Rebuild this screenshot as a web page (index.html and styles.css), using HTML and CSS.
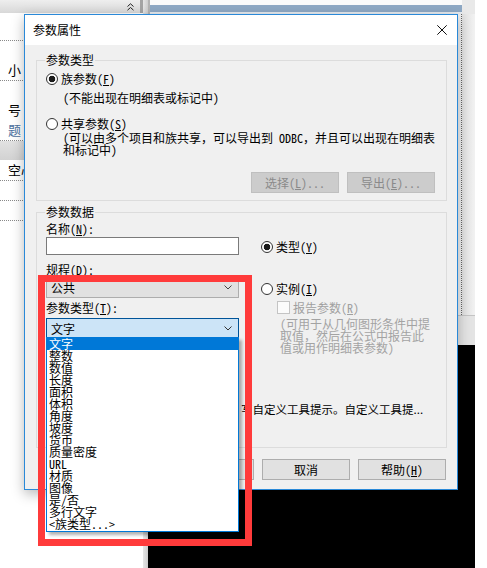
FILE: index.html
```html
<!DOCTYPE html>
<html lang="zh-CN">
<head>
<meta charset="utf-8">
<title>参数属性</title>
<link rel="stylesheet" href="styles.css">
</head>
<body>
<div class="desk">
  <div class="leftpane">
    <div class="lp-top">
      <svg class="chev" width="7" height="8" viewBox="0 0 7 8"><path d="M0.5 3.5 L3.5 0.8 L6.5 3.5 M0.5 7.2 L3.5 4.5 L6.5 7.2" fill="none" stroke="#222" stroke-width="1"/></svg>
    </div>
    <div class="lp-row r1"></div>
    <div class="lp-row r2"><span>小</span></div>
    <div class="lp-row r3"><span>号</span><span class="link">题</span></div>
    <div class="lp-band"></div>
    <div class="lp-row r4"><span>空心</span></div>
    <div class="lp-row r5"></div>
    <div class="lp-row r6"></div>
  </div>
  <div class="splitter"></div>
  <div class="mainpane">
    <div class="mp-top"><div class="mp-bar"></div><div class="mp-corner"></div></div>
    <div class="mp-upper"><div class="mp-fill"></div><div class="mp-strip"></div></div>
    <div class="mp-mid"></div>
    <div class="mp-black"></div>
  </div>
  <div class="rightgap"></div>
</div>

<div class="dialog">
  <div class="titlebar">
    <span class="title">参数属性</span>
    <svg class="close" width="10" height="10" viewBox="0 0 10 10"><path d="M0.3 0.3 L9.7 9.7 M9.7 0.3 L0.3 9.7" stroke="#111" stroke-width="1"/></svg>
  </div>
  <div class="dbody">
    <div class="group g1">
      <div class="legend">参数类型</div>
      <div class="radio-row rr1"><span class="radio on"></span><span>族参数(<u>F</u>)</span></div>
      <div class="note n1">(不能出现在明细表或标记中)</div>
      <div class="radio-row rr2"><span class="radio"></span><span>共享参数(<u>S</u>)</span></div>
      <div class="note n2">(可以由多个项目和族共享，可以导出到 ODBC，并且可以出现在明细表<br>和标记中)</div>
      <div class="btnrow g1btns">
        <div class="btn dis">选择(<u>L</u>)...</div>
        <div class="btn dis">导出(<u>E</u>)...</div>
      </div>
    </div>
    <div class="group g2">
      <div class="legend">参数数据</div>
      <div class="cols">
        <div class="lcol">
          <div class="lbl l1">名称(<u>N</u>):</div>
          <div class="input"></div>
          <div class="lbl l2">规程(<u>D</u>):</div>
          <div class="combo c1"><span>公共</span><svg width="8" height="5" viewBox="0 0 8 5"><path d="M0.5 0.5 L4 4 L7.5 0.5" fill="none" stroke="#444" stroke-width="1"/></svg></div>
          <div class="lbl l3">参数类型(<u>T</u>):</div>
          <div class="combo c2"><span>文字</span><svg width="8" height="5" viewBox="0 0 8 5"><path d="M0.5 0.5 L4 4 L7.5 0.5" fill="none" stroke="#333" stroke-width="1"/></svg></div>
        </div>
        <div class="rcol">
          <div class="radio-row rt"><span class="radio on"></span><span>类型(<u>Y</u>)</span></div>
          <div class="radio-row ri"><span class="radio"></span><span>实例(<u>I</u>)</span></div>
          <div class="check-row"><span class="check"></span><span>报告参数(<u>R</u>)</span></div>
          <div class="gnote">(可用于从几何图形条件中提<br>取值，然后在公式中报告此<br>值或用作明细表参数)</div>
        </div>
      </div>
      <div class="tip">写自定义工具提示。自定义工具提...</div>
    </div>
    <div class="btnrow dlgbtns">
      <div class="btn">确定</div>
      <div class="btn">取消</div>
      <div class="btn">帮助(<u>H</u>)</div>
    </div>
  </div>
</div>

<div class="droplist">
  <div class="item sel">文字</div>
  <div class="item">整数</div>
  <div class="item">数值</div>
  <div class="item">长度</div>
  <div class="item">面积</div>
  <div class="item">体积</div>
  <div class="item">角度</div>
  <div class="item">坡度</div>
  <div class="item">货币</div>
  <div class="item">质量密度</div>
  <div class="item">URL</div>
  <div class="item">材质</div>
  <div class="item">图像</div>
  <div class="item">是/否</div>
  <div class="item">多行文字</div>
  <div class="item">&lt;族类型...&gt;</div>
</div>

<div class="redbox"></div>
</body>
</html>
```

FILE: styles.css
```css
* { box-sizing: border-box; margin: 0; padding: 0; }
html, body { width: 487px; height: 568px; overflow: hidden; }
body {
  position: relative;
  background: #fff;
  color: #000;
  font-family: "Noto Sans Mono CJK SC", "Noto Sans CJK SC", sans-serif;
  font-size: 12px;
  line-height: 12px;
}
u { text-decoration: underline; text-underline-offset: 1px; }

/* ---------- background application ---------- */
.desk { display: flex; height: 568px; }
.leftpane { width: 143px; display: flex; flex-direction: column; background: #fff; }
.lp-top {
  height: 13px;
  flex: none;
  background: linear-gradient(#eeeeee, #d8d8d8);
  border-right: 3px solid #a4a4a4;
  display: flex;
  justify-content: flex-end;
  align-items: center;
  padding-right: 6px;
}
.lp-row { border-bottom: 1px dotted #8a8a8a; flex: none; display: flex; flex-direction: column; padding-left: 8px; font-size: 13px; }
.r1 { height: 28px; }
.r2 { height: 40px; padding-top: 23px; }
.r3 { height: 60px; padding-top: 23px; }
.r3 .link { margin-top: 8px; color: #4d72a0; }
.lp-band { height: 19px; flex: none; background: linear-gradient(#e2e2e2, #d2d2d2); }
.r4 { height: 21px; padding-top: 4px; }
.r5, .r6 { height: 20px; }

.splitter { width: 5px; background: linear-gradient(90deg, #e6e6e6, #cdcdcd); }
.mainpane { width: 327px; display: flex; flex-direction: column; }
.mp-top { height: 14px; display: flex; flex: none; }
.mp-bar {
  flex: 1;
  border-left: 2px solid #b4b4b4;
  background: linear-gradient(#fafafa 0 5px, #8ea8c4 5px 12px, #e6eaef 12px);
}
.mp-corner { width: 13px; background: #e9e9e9; }
.mp-upper { height: 301px; flex: none; display: flex; background: #f0f0f0; }
.mp-fill { flex: 1; }
.mp-strip { width: 14px; border-left: 1px dotted #666; background: linear-gradient(90deg, #e0e0e0, #f2f2f2); }
.mp-mid { height: 30px; flex: none; background: #e4e4e4; border-top: 1px solid #c4c4c4; }
.mp-black { flex: 1; background: #000; }
.rightgap { width: 12px; background: #fff; }

/* ---------- dialog window ---------- */
.dialog {
  position: absolute;
  left: 24px;
  top: 14px;
  width: 434px;
  height: 476px;
  border: 1px solid #2a89d8;
  background: #f0f0f0;
  box-shadow: 0 4px 12px rgba(0, 0, 0, 0.28);
  display: flex;
  flex-direction: column;
}
.titlebar {
  height: 30px;
  flex: none;
  background: #fff;
  display: flex;
  align-items: center;
  justify-content: space-between;
  padding: 0 10px 0 8px;
}
.dbody { flex: 1; padding: 0 10px 0 11px; display: flex; flex-direction: column; }

.group { border: 1px solid #dcdcdc; display: flex; flex-direction: column; flex: none; }
.legend {
  align-self: flex-start;
  height: 12px;
  margin: -7px 0 0 8px;
  padding: 0 1px;
  background: #f0f0f0;
}
.g1 { margin-top: 15px; height: 141px; }
.g2 { margin-top: 11px; height: 236px; }

.radio-row { display: flex; align-items: center; gap: 3px; height: 12px; }
.radio {
  width: 12px;
  height: 12px;
  border: 1px solid #333;
  border-radius: 50%;
  background: #fff;
  flex: none;
}
.radio.on { background: radial-gradient(circle, #1a1a1a 0 3px, #fff 3.6px); }
.rr1 { margin: 7px 0 0 9px; }
.note { margin-left: 26px; white-space: nowrap; }
.n1 { margin-top: 7px; }
.rr2 { margin: 14px 0 0 9px; }
.n2 { margin-top: 2px; }

.btnrow { display: flex; gap: 8px; }
.g1btns { margin: 16px 11px 0 0; align-self: flex-end; }
.btn {
  width: 88px;
  height: 21px;
  border: 1px solid #adadad;
  background: #e1e1e1;
  display: flex;
  align-items: center;
  justify-content: center;
  flex: none;
}
.btn.dis { background: #cccccc; border-color: #bfbfbf; color: #8a8a8a; }

.cols { display: flex; margin-left: 9px; }
.lcol { width: 193px; display: flex; flex-direction: column; }
.lbl { height: 12px; }
.l1 { margin-top: 5px; }
.input { margin-top: 2px; height: 18px; border: 1px solid #7a7a7a; background: #fff; }
.l2 { margin-top: 9px; }
.combo {
  height: 21px;
  display: flex;
  align-items: center;
  justify-content: space-between;
  padding: 0 6px 0 4px;
}
.c1 { margin-top: 1px; background: #e1e1e1; border: 1px solid #adadad; }
.l3 { margin-top: 4px; }
.c2 { margin-top: 4px; background: #cce4f7; border: 1px solid #005499; }

.rcol { margin-left: 22px; display: flex; flex-direction: column; }
.rt { margin-top: 23px; }
.ri { margin-top: 30px; }
.check-row { margin: 6px 0 0 16px; display: flex; align-items: center; gap: 3px; height: 13px; color: #a0a0a0; }
.check { width: 13px; height: 13px; border: 1px solid #c4c4c4; background: #fbfbfb; flex: none; }
.gnote { margin: 4px 0 0 19px; color: #a3a3a3; white-space: nowrap; }

.tip {
  margin: 49px 0 0 204px;
  white-space: nowrap;
  font-family: "Noto Sans CJK SC", sans-serif;
  font-size: 11.5px;
}

.dlgbtns { margin: 11px 1px 0 0; justify-content: flex-end; }

/* ---------- open dropdown list ---------- */
.droplist {
  position: absolute;
  left: 46px;
  top: 337px;
  width: 193px;
  height: 195px;
  border: 1px solid #0078d7;
  background: #fff;
  box-shadow: 3px 3px 3px rgba(0, 0, 0, 0.3);
}
.item { height: 12px; line-height: 12px; padding-left: 2px; white-space: nowrap; }
.item.sel { background: #0078d7; color: #fff; }

/* ---------- red annotation frame ---------- */
.redbox {
  position: absolute;
  left: 38px;
  top: 275px;
  width: 214px;
  height: 271px;
  border: 7px solid #ff3b3b;
}
```
